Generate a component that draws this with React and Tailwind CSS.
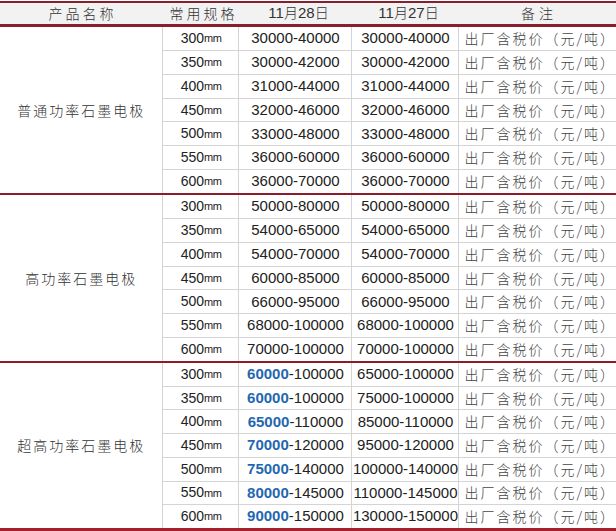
import React from 'react'

const groups = [
  {
    name: '普通功率石墨电极',
    rows: [
      ['300', null, '30000-40000', '30000-40000'],
      ['350', null, '30000-42000', '30000-42000'],
      ['400', null, '31000-44000', '31000-44000'],
      ['450', null, '32000-46000', '32000-46000'],
      ['500', null, '33000-48000', '33000-48000'],
      ['550', null, '36000-60000', '36000-60000'],
      ['600', null, '36000-70000', '36000-70000'],
    ],
  },
  {
    name: '高功率石墨电极',
    rows: [
      ['300', null, '50000-80000', '50000-80000'],
      ['350', null, '54000-65000', '54000-65000'],
      ['400', null, '54000-70000', '54000-70000'],
      ['450', null, '60000-85000', '60000-85000'],
      ['500', null, '66000-95000', '66000-95000'],
      ['550', null, '68000-100000', '68000-100000'],
      ['600', null, '70000-100000', '70000-100000'],
    ],
  },
  {
    name: '超高功率石墨电极',
    rows: [
      ['300', '60000', '-100000', '65000-100000'],
      ['350', '60000', '-100000', '75000-100000'],
      ['400', '65000', '-110000', '85000-110000'],
      ['450', '70000', '-120000', '95000-120000'],
      ['500', '75000', '-140000', '100000-140000'],
      ['550', '80000', '-145000', '110000-145000'],
      ['600', '90000', '-150000', '130000-150000'],
    ],
  },
]

const num = { fontFamily: '"Liberation Sans", Arial, sans-serif' }
const cjk = { fontFamily: '"Noto Sans CJK SC", "Noto Sans", sans-serif' }

export default function App() {
  return (
    <div className="w-[616px] h-[531px] bg-white pt-px overflow-hidden text-[#222]">
      <div className="flex h-[26px] bg-[#f2f2f2] border-t-2 border-b-[3px] border-[#86202c] text-[14px] font-light text-[#333] items-center" style={cjk}>
        <div className="w-[165px] text-center tracking-[3px]">产品名称</div>
        <div className="w-[77px] text-center tracking-[3px]">常用规格</div>
        <div className="w-[113px] text-center"><span style={num} className="text-[15px] font-normal">11</span>月<span style={num} className="text-[15px] font-normal">28</span>日</div>
        <div className="w-[107px] text-center"><span style={num} className="text-[15px] font-normal">11</span>月<span style={num} className="text-[15px] font-normal">27</span>日</div>
        <div className="flex-1 text-center tracking-[4px]">备注</div>
      </div>

      {groups.map((g, gi) => (
        <div
          key={g.name}
          className={`flex h-[168px] ${gi < 2 ? 'border-b-2 border-[#8b1c2a]' : 'border-b-[3px] border-[#a3202c]'}`}
        >
          <div className="w-[165px] flex items-center justify-center border-r border-[#d4d4d4] text-[14px] font-light tracking-[2px] text-[#333]" style={cjk}>
            {g.name}
          </div>
          <div className="flex-1 flex flex-col">
            {g.rows.map((r, ri) => (
              <div
                key={r[0]}
                className={`flex-1 grid grid-cols-[76px_113px_107px_1fr] items-center ${ri < 6 ? 'border-b border-[#d4d4d4]' : ''}`}
              >
                <div className="h-full flex items-center justify-center border-r border-[#d4d4d4] text-[14px]" style={num}>
                  {r[0]}<span className="text-[11px] tracking-[-0.5px]">mm</span>
                </div>
                <div className="h-full flex items-center justify-center border-r border-[#d4d4d4] text-[15px]" style={num}>
                  {r[1] && <span className="font-bold text-[#1f68b0]">{r[1]}</span>}
                  {r[2]}
                </div>
                <div className="h-full flex items-center justify-center border-r border-[#d4d4d4] text-[15px]" style={num}>
                  {r[3]}
                </div>
                <div className="h-full flex items-center pl-[5px] text-[14px] font-light text-[#444] tracking-[2px] whitespace-nowrap" style={cjk}>
                  出厂含税价（元/吨）
                </div>
              </div>
            ))}
          </div>
        </div>
      ))}
    </div>
  )
}
